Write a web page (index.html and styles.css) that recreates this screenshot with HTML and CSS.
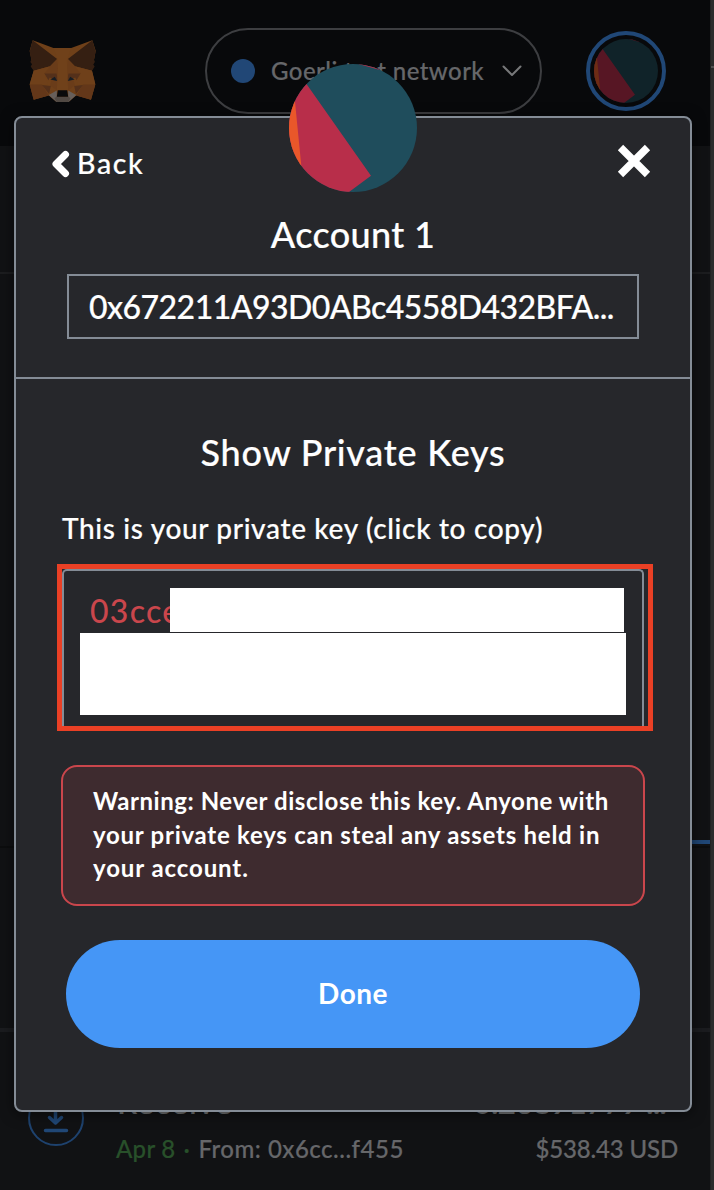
FILE: index.html
```
<!DOCTYPE html>
<html lang="en">
<head>
<meta charset="utf-8">
<title>Show Private Keys</title>
<link rel="stylesheet" href="styles.css">
</head>
<body>
<div class="screen">
  <div class="app">
    <header class="app-header">
      <svg class="fox" viewBox="88 60 200 188">
        <path fill="#6f4019" d="M99 61L161 84H214L277 61L287 92L276 152L286 193L273 238L229 226L206 245H170L147 226L102 238L90 193L102 152L90 92Z"/>
        <path fill="#351f12" d="M99 61L172 117L151 138L102 152L93 139L97 132L92 126L95 119L90 94ZM277 61L204 117L225 138L276 152L284 139L279 132L285 126L282 119L287 94Z"/>
        <path fill="#6f401a" d="M102 152L151 138L134 160L144 192H90ZM276 152L225 138L242 160L232 192H286Z"/>
        <path fill="#633719" d="M90 193H127L147 226L102 238ZM286 193H249L229 226L273 238Z"/>
        <path fill="#6a3c19" d="M172 117L178 190L171 210L151 196L157 174L134 160L151 138ZM204 117L198 190L205 210L225 196L219 174L242 160L225 138Z"/>
        <path fill="#54301a" d="M134 160H170L175 182L150 172L146 180ZM242 160H206L201 182L226 172L230 180ZM127 194L153 197L148 221ZM249 194L223 197L228 221Z"/>
        <path fill="#70411a" d="M161 84H214L201 121L205 211H171L175 121Z"/>
        <path fill="#151d25" d="M152 178L165 170L172 182ZM224 178L211 170L204 182Z"/>
        <path fill="#675f5a" d="M147 224L171 211V230H205V211L229 224L206 245H170Z"/>
        <path fill="#514943" d="M164 233L171 229H205L212 233L206 245H170Z"/>
        <path fill="#090a0b" d="M174 210H202L205 229H171Z"/>
      </svg>
      <div class="network">
        <span class="network-dot"></span>
        <span class="network-name">Goerli test network</span>
        <svg class="chevron" viewBox="0 0 20 12"><path d="M1.5 1.5L10 10L18.5 1.5"/></svg>
      </div>
      <div class="account-ring">
        <svg class="account-avatar" viewBox="0 0 384 384">
          <rect width="384" height="384" fill="#102329"/>
          <path fill="#571624" d="M0 0L53 61L246 335L180 384H0ZM208 0H273V18Z"/>
          <path fill="#6d2c14" d="M0 0H8L18 113L37 306V384H0Z"/>
        </svg>
      </div>
    </header>
    <div class="bar-section"></div>
    <div class="overview-section"></div>
    <div class="tab-section"></div>
    <div class="activity">
      <div class="receive-icon">
        <svg viewBox="0 0 56 56"><path d="M27.500 12V33M21.500 27.500L27.500 33L33.500 27.500M17.500 40.500H38.500"/></svg>
      </div>
      <div class="activity-info">
        <div class="activity-title">Receive</div>
        <div class="activity-sub"><span class="date">Apr 8</span><span class="sep">·</span><span class="from">From: 0x6cc...f455</span></div>
      </div>
      <div class="activity-amount">
        <div class="amount">0.26891779 ...</div>
        <div class="fiat">$538.43 USD</div>
      </div>
    </div>
    <div class="scrollbar"></div>
  </div>

  <section class="modal">
    <div class="modal-head">
      <div class="modal-nav">
        <div class="back">
          <svg class="back-icon" viewBox="0 0 20 28"><path d="M15.500 4.500L6 14L15.500 23.500"/></svg>
          <span>Back</span>
        </div>
        <svg class="close" viewBox="0 0 34 34"><path d="M3.500 3.500L30.500 30.500M30.500 3.500L3.500 30.500"/></svg>
      </div>
      <h1 class="account-name">Account 1</h1>
      <div class="address">0x672211A93D0ABc4558D432BFA...</div>
    </div>
    <div class="modal-body">
      <h2 class="title">Show Private Keys</h2>
      <p class="hint">This is your private key (click to copy)</p>
      <div class="key-frame">
        <div class="key-box">
          <div class="key-line"><span class="key-text">03cce</span><span class="mask"></span></div>
          <div class="mask-block"></div>
        </div>
      </div>
      <div class="warning"><span class="warn-first">Warning: Never disclose this key. Anyone with</span><br><span class="warn-second">your private keys can steal any assets held in</span><br><span class="warn-third">your account.</span></div>
      <button class="done">Done</button>
    </div>
    <svg class="modal-avatar" viewBox="0 0 384 384">
      <rect width="384" height="384" fill="#1f4d5c"/>
      <path fill="#b82e4a" d="M0 0L53 61L246 335L180 384H0ZM208 0H273V18Z"/>
      <path fill="#e9572a" d="M0 0H8L18 113L37 306V384H0Z"/>
    </svg>
  </section>
</div>
</body>
</html>
```

FILE: styles.css
```
* { box-sizing: border-box; }
body { margin: 0; background: #111214; font-family: Lato, "Open Sans", sans-serif; color: #fff; font-weight: 500; white-space: nowrap; -webkit-text-stroke: .2px currentColor; }
.screen { position: relative; width: 714px; height: 1190px; overflow: hidden; }
.app { position: relative; height: 1190px; color: #66676a; }
.scrollbar { position: absolute; top: 0; right: 0; width: 4px; height: 1190px; background: linear-gradient(#505050, #505050) 0 66px / 4px 2px no-repeat, #2b2b2b; border-left: 1px solid #222; }

.app-header { height: 146px; background: #08090b; display: flex; align-items: flex-start; padding: 28px 48px 0 29px; }
.fox { width: 67px; height: 63px; margin-top: 12px; }
.network { display: flex; align-items: center; width: 337px; height: 86px; margin-left: 109px; padding: 0 18px 0 24px; border: 2px solid #3d3e41; border-radius: 43px; }
.network-dot { width: 24px; height: 24px; border-radius: 50%; background: #214776; }
.network-name { width: 214px; margin-left: 16px; padding-bottom: 2px; font-size: 24px; letter-spacing: .43px; }
.chevron { width: 20px; height: 12px; margin-left: auto; fill: none; stroke: #77787a; stroke-width: 2; stroke-linecap: round; stroke-linejoin: round; }
.account-ring { width: 80px; height: 80px; margin: 3px 0 0 44px; padding: 4px; border: 4px solid #204776; border-radius: 50%; }
.account-avatar { display: block; width: 64px; height: 64px; border-radius: 50%; }

.bar-section { height: 128px; border-bottom: 2px solid #1c1d1f; }
.overview-section { height: 574px; border-bottom: 2px solid #0c0d0e; background: linear-gradient(#204776, #204776) right 566px / 357px 4px no-repeat; }
.tab-section { height: 184px; border-bottom: 4px solid #1b1c1f; }
.activity { display: flex; padding: 58px 36px 0 28px; }
.receive-icon { width: 56px; height: 56px; border: 2px solid #1e426e; border-radius: 50%; }
.receive-icon svg { display: block; width: 56px; height: 56px; margin: -2px; fill: none; stroke: #204776; stroke-width: 3.500; stroke-linecap: round; stroke-linejoin: round; }
.activity-info { margin-left: 32px; }
.activity-title, .amount { height: 42px; font-size: 32px; line-height: 23px; color: #77787a; }
.activity-title { padding-left: 1px; letter-spacing: 1px; }
.activity-sub, .fiat { font-size: 24px; line-height: 34px; letter-spacing: .5px; }
.activity-amount { margin-left: auto; text-align: right; }
.amount { letter-spacing: -.9px; padding-right: 12px; }
.fiat { letter-spacing: -.15px; }
.date { color: #28502a; letter-spacing: .3px; }
.sep { margin: 0 8px; color: #28502a; }

.modal { position: absolute; left: 14px; top: 116px; width: 678px; height: 996px; background: #26272b; border: 2px solid #848c96; border-radius: 8px; box-shadow: 0 2px 14px rgba(0,0,0,.55); }
.modal-avatar { position: absolute; left: 273px; top: -54px; width: 128px; height: 128px; border-radius: 50%; }
.modal-head { height: 261px; border-bottom: 2px solid #848c96; padding: 26px 39px 0 34px; }
.modal-nav { display: flex; justify-content: space-between; height: 73px; }
.back { display: flex; height: 40px; align-items: center; font-size: 28.500px; letter-spacing: 1.600px; }
.back span { padding-bottom: 2px; }
.back-icon { width: 20px; height: 28px; margin-right: 7px; fill: none; stroke: #fff; stroke-width: 7; stroke-linecap: round; stroke-linejoin: round; }
.close { width: 34px; height: 34px; fill: none; stroke: #fff; stroke-width: 7.500; }
.account-name { margin: 0; padding-left: 5px; height: 36px; font-size: 36px; line-height: 35px; font-weight: 500; letter-spacing: .35px; text-align: center; }
.address { width: 572px; height: 65px; margin: 21px 0 0 17px; border: 2px solid #848c96; padding-left: 20px; font-size: 32px; line-height: 61px; letter-spacing: -.55px; }
.modal-body { padding: 0 46px; }
.title { margin: 0; padding-top: 51px; height: 128px; font-size: 36px; line-height: 44px; font-weight: 500; letter-spacing: .75px; text-align: center; }
.hint { margin: 0; height: 57px; font-size: 28px; line-height: 43px; letter-spacing: .65px; }
.key-frame { width: 596px; height: 167px; margin-left: -5px; border: 5px solid #ea4025; }
.key-box { width: 582px; height: 157px; border: 2px solid #848c96; border-bottom: 0; border-radius: 5px 5px 0 0; padding: 17px 16px 0; }
.key-line { display: flex; height: 45px; padding-left: 10px; }
.key-text { width: 80px; height: 44px; font-size: 32px; line-height: 45px; letter-spacing: 1.300px; color: #ca464c; -webkit-text-stroke: 0; }
.mask { position: relative; width: 454px; height: 44px; background: #fff; }
.mask-block { width: 546px; height: 82px; background: #fff; }
.warning { width: 584px; height: 141px; margin: 34px 0 0 -1px; border: 2px solid #ca464c; border-radius: 16px; background: #3e2b2f; padding: 17px 30px; font-size: 24px; line-height: 33.600px; font-weight: 700; -webkit-text-stroke: 0; }
.warn-first { letter-spacing: .55px; }
.warn-second { letter-spacing: .74px; }
.warn-third { letter-spacing: .9px; }
.done { display: block; width: 574px; height: 108px; margin: 34px 0 0 4px; border: 0; padding: 0 0 3px; border-radius: 54px; background: #4596f6; color: #fff; font: 700 28px Lato, sans-serif; letter-spacing: .5px; -webkit-text-stroke: 0; }
```
